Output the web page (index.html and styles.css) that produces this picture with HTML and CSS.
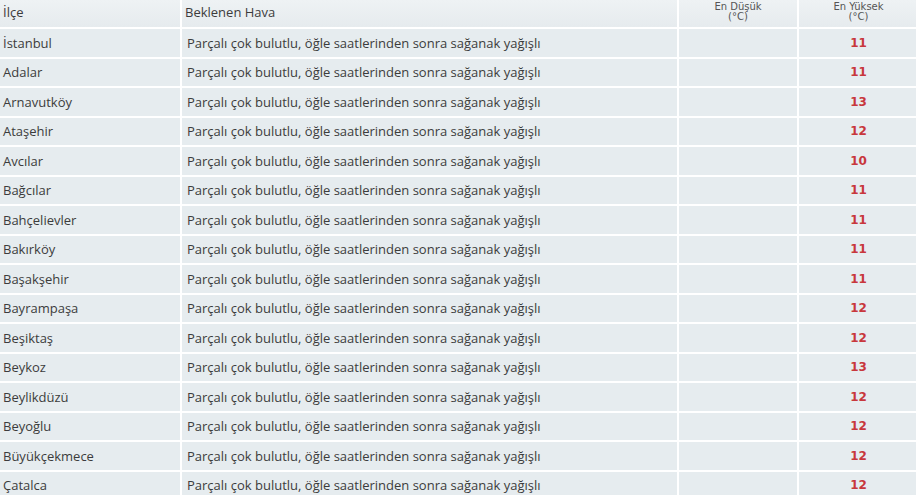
FILE: index.html
```html
<!DOCTYPE html>
<html lang="tr">
<head>
<meta charset="utf-8">
<link rel="stylesheet" href="styles.css">
</head>
<body>
<table class="forecast">
  <colgroup>
    <col class="c-ilce">
    <col class="c-hava">
    <col class="c-min">
    <col class="c-max">
  </colgroup>
  <thead>
    <tr>
      <th class="h-left">İlçe</th>
      <th class="h-left">Beklenen Hava</th>
      <th class="h-small">En Düşük<br>(°C)</th>
      <th class="h-small">En Yüksek<br>(°C)</th>
    </tr>
  </thead>
  <tbody>
    <tr><td>İstanbul</td><td>Parçalı çok bulutlu, öğle saatlerinden sonra sağanak yağışlı</td><td></td><td class="max">11</td></tr>
    <tr><td>Adalar</td><td>Parçalı çok bulutlu, öğle saatlerinden sonra sağanak yağışlı</td><td></td><td class="max">11</td></tr>
    <tr><td>Arnavutköy</td><td>Parçalı çok bulutlu, öğle saatlerinden sonra sağanak yağışlı</td><td></td><td class="max">13</td></tr>
    <tr><td>Ataşehir</td><td>Parçalı çok bulutlu, öğle saatlerinden sonra sağanak yağışlı</td><td></td><td class="max">12</td></tr>
    <tr><td>Avcılar</td><td>Parçalı çok bulutlu, öğle saatlerinden sonra sağanak yağışlı</td><td></td><td class="max">10</td></tr>
    <tr><td>Bağcılar</td><td>Parçalı çok bulutlu, öğle saatlerinden sonra sağanak yağışlı</td><td></td><td class="max">11</td></tr>
    <tr><td>Bahçelievler</td><td>Parçalı çok bulutlu, öğle saatlerinden sonra sağanak yağışlı</td><td></td><td class="max">11</td></tr>
    <tr><td>Bakırköy</td><td>Parçalı çok bulutlu, öğle saatlerinden sonra sağanak yağışlı</td><td></td><td class="max">11</td></tr>
    <tr><td>Başakşehir</td><td>Parçalı çok bulutlu, öğle saatlerinden sonra sağanak yağışlı</td><td></td><td class="max">11</td></tr>
    <tr><td>Bayrampaşa</td><td>Parçalı çok bulutlu, öğle saatlerinden sonra sağanak yağışlı</td><td></td><td class="max">12</td></tr>
    <tr><td>Beşiktaş</td><td>Parçalı çok bulutlu, öğle saatlerinden sonra sağanak yağışlı</td><td></td><td class="max">12</td></tr>
    <tr><td>Beykoz</td><td>Parçalı çok bulutlu, öğle saatlerinden sonra sağanak yağışlı</td><td></td><td class="max">13</td></tr>
    <tr><td>Beylikdüzü</td><td>Parçalı çok bulutlu, öğle saatlerinden sonra sağanak yağışlı</td><td></td><td class="max">12</td></tr>
    <tr><td>Beyoğlu</td><td>Parçalı çok bulutlu, öğle saatlerinden sonra sağanak yağışlı</td><td></td><td class="max">12</td></tr>
    <tr><td>Büyükçekmece</td><td>Parçalı çok bulutlu, öğle saatlerinden sonra sağanak yağışlı</td><td></td><td class="max">12</td></tr>
    <tr><td>Çatalca</td><td>Parçalı çok bulutlu, öğle saatlerinden sonra sağanak yağışlı</td><td></td><td class="max">12</td></tr>
  </tbody>
</table>
</body>
</html>
```
FILE: styles.css
```css
html, body {
  margin: 0;
  padding: 0;
  background: #ffffff;
}

.forecast {
  border-collapse: collapse;
  table-layout: fixed;
  width: 918px;
  font-family: "Open Sans", "Noto Sans", sans-serif;
  font-size: 13px;
  color: #3c3c3c;
}

.c-ilce { width: 181px; }
.c-hava { width: 497px; }
.c-min { width: 120px; }
.c-max { width: 120px; }

.forecast th,
.forecast td {
  background: #e6ecef;
  border-right: 2px solid #ffffff;
  border-bottom: 2px solid #ffffff;
  padding: 0 0 0 4px;
  text-align: left;
  vertical-align: middle;
  white-space: nowrap;
}

.forecast th:last-child,
.forecast td:last-child {
  border-right: none;
}

.forecast thead th {
  height: 23px;
  font-weight: normal;
  background: linear-gradient(#eef2f4, #e6ebee);
}

.forecast th.h-left {
  padding-left: 3px;
  padding-bottom: 4px;
}

.forecast th.h-small {
  font-family: "DejaVu Sans", Verdana, sans-serif;
  font-size: 10px;
  line-height: 10px;
  text-align: center;
  color: #555555;
  vertical-align: top;
  padding: 2px 0 0 0;
}

.forecast tbody td {
  height: 27.5px;
}

.forecast td:first-child {
  padding-left: 3px;
}

.forecast td:nth-child(2) {
  padding-left: 5px;
}

.forecast td.max {
  text-align: center;
  padding: 0;
  font-family: "DejaVu Sans", Verdana, sans-serif;
  font-weight: bold;
  font-size: 12px;
  color: #c8373c;
}
```
